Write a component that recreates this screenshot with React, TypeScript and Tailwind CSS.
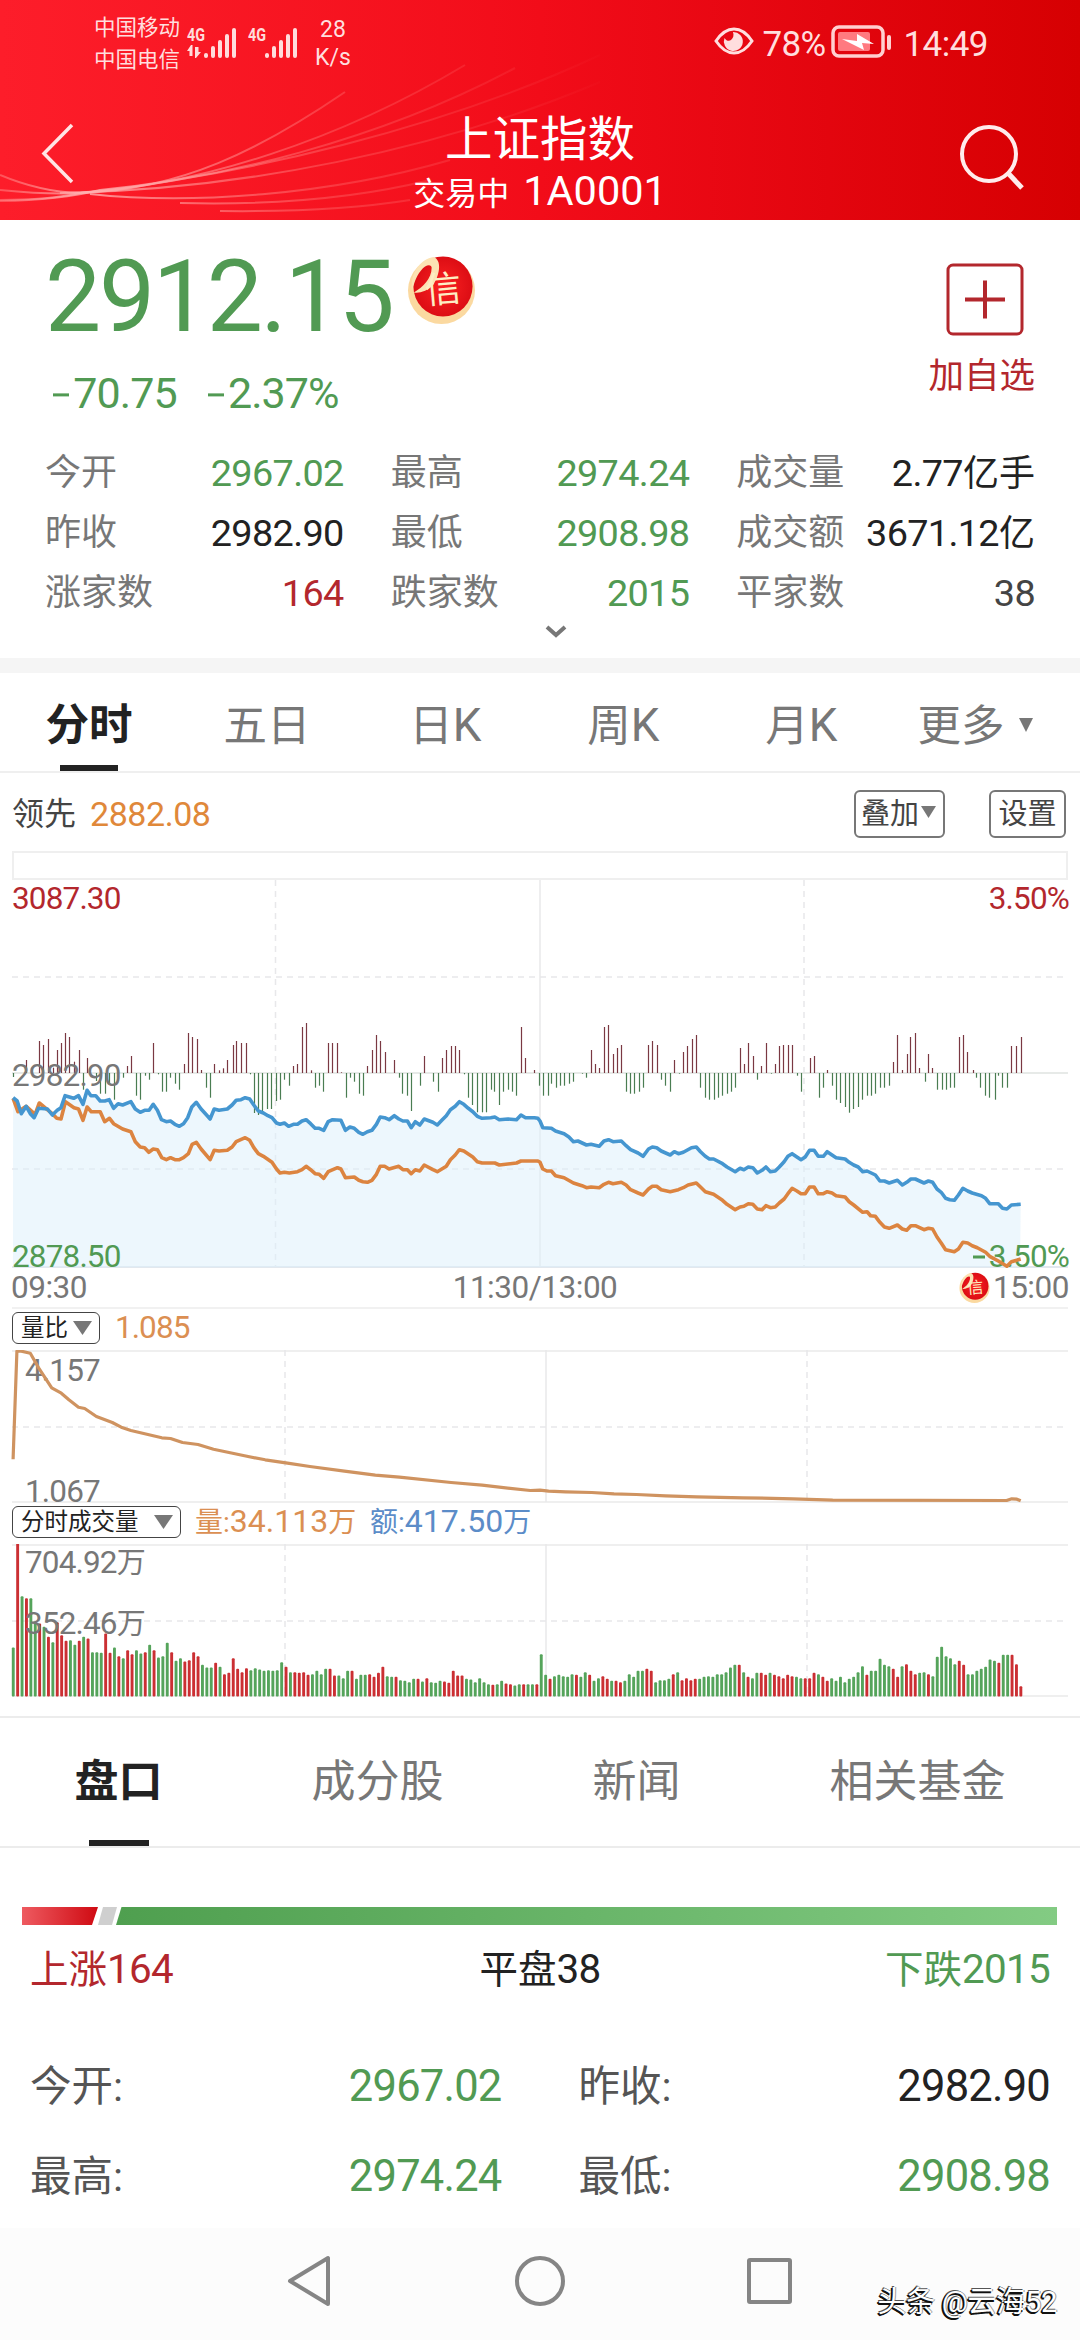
import { Fragment, type ReactNode } from "react";
import clsx from "clsx";

const FONT = "font-[Roboto,'Noto_Sans_CJK_SC',sans-serif]";

const KX = 1 / 2.904;
const KY = 1 / 3;

const PRICE_AM =
  "38,590 50,600 62,638 76,616 88,638 99,650 112,622 138,624 152,642 166,628 177,620 189,584 214,592 228,584 241,610 253,568 264,584 278,584 291,600 304,600 317,596 330,622 343,608 356,612 380,602 393,624 407,634 420,628 433,628 445,610 457,628 469,656 483,662 495,660 508,670 521,676 533,668 545,650 557,618 570,604 584,624 598,640 610,654 622,624 636,628 660,624 674,612 686,598 700,596 712,590 725,594 737,612 750,630 765,636 778,644 790,650 803,666 813,670 826,666 838,676 852,670 864,670 877,660 889,656 902,668 915,682 927,682 940,688 953,662 966,656 990,658 1003,688 1016,678 1029,682 1042,694 1054,700 1067,692 1080,688 1093,670 1104,648 1117,650 1130,656 1145,644 1158,654 1170,660 1183,660 1194,680 1206,662 1219,672 1232,654 1257,664 1270,672 1283,658 1296,644 1308,626 1322,616 1334,602 1347,610 1360,622 1373,632 1386,646 1400,652 1425,650 1437,648 1450,656 1475,654 1500,656 1513,642 1526,650 1552,650 1562,652";
const PRICE_PM =
  "0,660 8,680 33,682 45,690 70,698 84,708 97,722 110,720 135,732 148,730 172,736 186,720 199,716 212,722 236,720 250,734 263,746 285,756 299,766 315,744 326,738 339,740 352,750 378,762 390,752 402,758 416,754 440,740 454,738 466,752 480,766 492,774 504,774 530,788 543,798 567,812 581,802 592,806 605,798 618,800 631,816 645,808 656,798 669,812 683,810 695,798 709,782 720,766 732,758 746,768 758,776 770,768 783,748 796,748 808,766 823,766 834,752 848,762 860,770 886,774 898,784 911,792 924,798 937,812 950,810 974,822 987,840 1000,840 1014,846 1038,838 1052,852 1065,844 1077,834 1090,834 1115,846 1128,840 1140,844 1153,864 1165,874 1178,892 1190,896 1203,898 1215,882 1228,862 1242,870 1255,876 1282,884 1294,892 1306,908 1331,908 1343,922 1356,924 1369,912 1396,910";
const LEAD_AM =
  "38,592 52,632 76,616 102,640 114,606 128,618 140,628 152,638 165,652 177,654 190,602 215,620 228,624 241,658 253,618 265,632 291,632 304,662 318,652 330,668 356,684 380,692 393,722 407,738 420,740 432,754 445,744 457,746 470,770 483,776 495,770 508,776 521,776 533,770 547,758 558,730 570,724 584,744 610,776 622,748 636,750 660,748 674,738 686,722 712,710 725,718 737,740 750,758 765,766 790,784 803,804 813,816 826,814 840,816 864,812 877,806 889,796 902,806 915,818 927,820 940,832 953,812 980,800 990,804 1003,830 1029,828 1042,838 1054,842 1067,844 1080,838 1093,820 1104,796 1117,796 1130,804 1158,796 1170,806 1183,806 1194,818 1206,806 1219,810 1232,792 1257,806 1270,812 1296,796 1308,776 1322,762 1334,746 1347,750 1373,768 1386,782 1400,786 1437,786 1450,792 1500,786 1513,780 1562,780";
const LEAD_PM =
  "0,784 8,804 20,810 33,810 45,824 70,830 97,846 122,854 135,860 148,858 172,860 186,850 199,844 212,848 236,844 250,852 263,866 285,876 299,882 315,864 326,856 339,856 352,866 378,872 402,866 416,860 430,852 454,846 466,858 480,872 504,880 530,898 543,910 567,926 581,918 592,916 605,908 618,910 631,924 645,926 656,914 669,920 683,918 695,906 709,894 720,878 732,862 746,870 758,878 770,878 783,858 796,858 808,878 823,878 834,872 848,876 860,884 886,888 898,902 911,912 937,934 950,932 960,944 974,946 987,964 1000,978 1014,982 1038,972 1052,984 1065,988 1077,974 1090,974 1115,986 1128,982 1140,984 1153,1008 1165,1026 1178,1046 1203,1052 1215,1044 1228,1024 1242,1026 1255,1034 1270,1040 1294,1054 1306,1066 1331,1080 1356,1096 1369,1082 1396,1074";
const DIFF_AM =
  "38,528 76,477 89,500 114,420 126,432 140,414 153,500 165,447 178,426 190,396 201,408 215,482 228,447 241,566 254,471 278,540 291,578 304,578 317,550 330,596 356,530 368,495 381,465 394,584 408,596 420,524 432,536 445,426 458,520 469,572 483,572 495,530 509,548 521,566 533,489 547,396 559,408 571,414 585,507 597,560 611,590 622,489 635,508 648,502 660,477 676,432 686,420 699,426 713,426 725,520 737,636 750,642 762,634 776,624 788,624 801,600 814,596 826,536 838,554 852,495 863,489 878,378 890,366 902,508 916,560 927,554 939,572 953,426 965,426 979,426 991,514 1004,590 1017,530 1029,542 1043,578 1055,584 1067,495 1081,447 1093,402 1104,420 1119,453 1145,477 1158,530 1168,578 1183,584 1194,630 1221,554 1232,465 1258,542 1271,572 1285,471 1296,447 1311,435 1322,435 1334,447 1348,520 1360,590 1372,612 1386,634 1400,634 1412,634 1425,566 1436,572 1450,612 1461,572 1474,566 1488,572 1499,584 1514,378 1525,471 1552,507 1564,554";
const DIFF_PM =
  "8,584 22,584 33,548 47,560 59,554 71,554 85,548 97,542 123,518 135,530 149,447 161,489 172,501 187,378 198,372 213,459 224,441 236,432 251,572 262,578 274,578 288,572 300,560 315,432 326,420 339,432 352,536 364,554 378,572 390,477 403,518 416,453 428,435 440,414 454,402 466,560 480,590 491,596 504,596 518,590 529,584 542,578 556,572 567,560 582,441 593,489 605,426 619,465 631,536 643,495 657,426 670,518 683,489 695,435 707,432 721,432 733,432 747,524 759,572 785,471 797,465 809,590 823,560 834,507 849,554 860,596 872,606 887,618 898,635 910,624 924,618 936,596 950,584 962,584 974,578 988,560 1000,560 1014,554 1026,483 1038,402 1052,507 1065,459 1075,408 1090,396 1102,501 1117,542 1128,459 1139,501 1154,566 1166,566 1178,566 1192,560 1203,560 1218,408 1229,402 1241,453 1256,507 1267,530 1279,560 1293,584 1305,590 1320,596 1331,524 1343,560 1357,560 1369,435 1383,435 1396,408";
const RATIO_AM =
  "38,506 49,182 62,182 88,188 112,232 150,292 178,308 200,328 228,350 246,354 280,378 326,396 352,410 380,420 470,442 495,444 530,456 575,462 620,476 710,496 770,508 835,518 900,528 1000,542 1090,554 1160,560 1310,576 1400,584 1540,600";
const RATIO_PM =
  "0,599 25,602 75,604 150,606 215,610 280,612 365,616 455,619 590,622 735,625 850,629 1355,630 1370,625 1385,626 1396,631";
// one bar a minute: direction and height
const VOLUME =
  "g147 r462 g301 r295 g295 g219 r219 g209 r179 g163 r223 r184 r167 g169 g155 r167 g179 r174 g133 g133 g131 r189 r131 g147 r121 g115 r139 r127 g139 g129 r133 g155 r139 g117 g121 g161 r133 g107 g115 r105 r109 r133 r121 g95 g87 g87 r101 g89 r67 r71 r115 r83 r73 r85 g79 g85 g81 g77 g79 g77 g79 g103 r89 g73 r73 r71 r73 r65 g67 g77 g67 g83 r83 r63 g63 g55 g77 r77 g53 g65 g65 r67 r59 r71 r89 g61 g59 r59 g49 g47 g43 g53 r53 g45 r55 g43 g41 g47 r45 r41 r77 r63 r63 g53 g51 g43 g55 g43 g37 r35 g37 g47 r39 r37 g33 g37 r37 g37 g37 r37 " +
  "g127 g65 r53 g61 g65 g61 g59 g67 r65 g59 g73 r65 g47 g55 r61 r53 g47 r47 r43 g47 g67 g59 g77 g77 r83 r77 g43 g49 g49 g53 r67 g73 r49 r55 r49 r53 g53 g59 g61 g59 g67 g67 g73 g87 g95 r95 g73 r59 g55 g71 r71 r65 g71 r65 r61 r55 r65 r61 g59 g55 r55 r55 r71 g67 r59 r47 g55 g47 g59 g43 g53 g59 g73 g91 r65 g77 g77 g113 g95 g91 r83 r59 g91 r97 r77 r67 g71 g73 r67 g61 g119 g149 g121 g115 g97 r107 r95 g67 g67 g77 g83 g89 g111 g107 r101 g125 g125 r125 r97 r31";

const parse = (s: string, ox: number, oy: number) =>
  s.split(" ").map((p) => {
    const [x, y] = p.split(",").map(Number);
    return [x * KX + ox, y * KY + oy];
  });

const series = (am: string, pm: string, oy: number) => [...parse(am, 0, oy), ...parse(pm, 540, oy)];
const toPoints = (pts: number[][]) => pts.map(([x, y]) => `${x.toFixed(1)},${y.toFixed(1)}`).join(" ");

// latin digits sit a touch larger than the chinese glyphs around them
function Txt({ children }: { children: string }) {
  return (
    <>
      {children.split(/([\dA-Z.:%/]+)/).map((part, i) => (
        <Fragment key={i}>
          {i % 2 ? <span className="text-[1.05em] tracking-[-0.017em]">{part}</span> : part}
        </Fragment>
      ))}
    </>
  );
}

function Minus() {
  return <span className="mr-[4px] inline-block h-[0.08em] w-[0.38em] -translate-y-[0.27em] bg-current" />;
}

function Seal({ size }: { size: number }) {
  return (
    <svg width={size} height={size} viewBox="0 0 70 70">
      <defs>
        <radialGradient id="sealRed">
          <stop offset="0" stopColor="#fb2222" />
          <stop offset="1" stopColor="#dc0d14" />
        </radialGradient>
      </defs>
      <circle cx="35" cy="36" r="34" fill="#fbd9a0" />
      <ellipse cx="36.5" cy="32" rx="30" ry="30.5" fill="url(#sealRed)" />
      <path d="M5 36C3 18 14 4 27 2C35 5 34 18 27 30C21 37 12 39 7 38C16 33 25 24 25 13C25 9 19 9 14 16C9 22 7 30 5 36Z" fill="#fce3b4" />
      <text x="18" y="48" fontSize="37" fill="#fdeec4" transform="rotate(-5 35 35)" className="font-['Noto_Sans_CJK_SC',sans-serif]">
        信
      </text>
    </svg>
  );
}

function Signal({ data }: { data?: boolean }) {
  return (
    <svg width="50" height="34" viewBox="0 0 50 34" fill="#ffdcdc" className="overflow-visible">
      <text x="0" y="15" fontSize="19" fontWeight="700" textLength="18" lengthAdjust="spacingAndGlyphs">4G</text>
      {data && <path d="M4 19l-4 6h2.500v5h3V19zM9 32l5-6h-2.500v-5H8v11z" />}
      {[5, 12, 18, 24, 30].map((h, i) => (
        <rect key={h} x={17 + i * 7} y={32 - h} width="4" height={h} rx="2" />
      ))}
    </svg>
  );
}

function StatusBar() {
  return (
    <div className="flex h-[86px] justify-between pt-[8px] pr-[92px] pl-[94px] text-[#ffdede]">
      <div className="flex">
        <div className="pt-[4px] text-[21.500px] leading-[32px]">
          <p>中国移动</p>
          <p>中国电信</p>
        </div>
        <div className="ml-[7px] flex gap-[11px] pt-[18px]">
          <Signal data />
          <Signal />
        </div>
        <div className="ml-[9px] w-[52px] pt-[8px] text-center text-[23px] leading-[28px]">
          <p>28</p>
          <p>K/s</p>
        </div>
      </div>
      <div className="flex h-[58px] items-center pt-[14px] text-[35px] leading-none">
        <svg width="40" height="28" viewBox="0 0 40 28" className="-translate-y-[3px]">
          <path d="M2 14C8 5 14 2 20 2s12 3 18 12c-6 9-12 12-18 12S8 23 2 14z" fill="none" stroke="#ffdede" strokeWidth="3" />
          <path d="M19 5a9.500 9.500 0 1 1-8.500 6c2 3 4.500 3.500 6.500 2c2.500-2 3-5 2-8z" fill="#ffdede" />
        </svg>
        <span className="ml-[8px] w-[64px] tracking-[-0.02em]">78%</span>
        <svg width="64" height="34" viewBox="0 0 64 34" className="ml-[5px] -translate-y-[2px]">
          <rect x="2" y="2" width="50" height="29" rx="6" fill="none" stroke="#ffd0d0" strokeWidth="3.500" />
          <rect x="7" y="7" width="32" height="19" rx="2" fill="#ff7a80" />
          <path d="M11 14l15 2V9l17 10-12-1 2 7z" fill="#fff" />
          <rect x="56" y="10" width="4" height="15" rx="2" fill="#ffd0d0" />
        </svg>
        <span className="ml-[8px] tracking-[-0.015em]">14:49</span>
      </div>
    </div>
  );
}

function Header() {
  return (
    <header className="relative h-[220px] bg-linear-to-r from-[#fd1d2a] via-[#f20c19] via-50% to-[#d60002]">
      <svg className="absolute inset-0" width="1080" height="220" fill="none" strokeWidth="2">
        <defs>
          <linearGradient id="fade" gradientUnits="userSpaceOnUse" x1="0" y1="0" x2="620" y2="0">
            <stop offset="0" stopColor="#ff8a8a" stopOpacity=".5" />
            <stop offset=".14" stopColor="#ffb0b0" stopOpacity=".8" />
            <stop offset=".55" stopColor="#ff7a7a" stopOpacity=".35" />
            <stop offset="1" stopColor="#ff7a7a" stopOpacity="0" />
          </linearGradient>
        </defs>
        <g stroke="url(#fade)">
          <path d="M0 175Q40 192 80 193C180 190 260 150 345 92" />
          <path d="M0 190Q50 195 80 193C200 185 340 140 465 65" />
          <path d="M0 200Q50 200 80 193C220 180 380 140 515 68" />
          <path d="M0 201Q60 200 100 190C240 175 440 130 600 55" />
          <path d="M60 193C240 190 440 150 600 82" />
          <path d="M90 194C190 205 330 195 450 160" />
          <path d="M180 203C260 205 350 200 430 180" />
          <path d="M220 211C300 212 360 208 410 200" />
        </g>
      </svg>
      <div className="relative">
        <StatusBar />
        <div className="flex items-start justify-between pr-[54px] pl-[40px] text-white">
          <svg width="36" height="64" viewBox="0 0 36 64" className="mt-[36px]" fill="none" stroke="#ffe4e4" strokeWidth="3.500">
            <path d="M32 3L4 31.500L32 60" />
          </svg>
          <div className="ml-[46px] pt-[28px] text-center">
            <h1 className="text-[47.500px] leading-[52px]">上证指数</h1>
            <p className="text-[32px] leading-[50px]">
              交易中<span className="ml-[14px] text-[41.500px]">1A0001</span>
            </p>
          </div>
          <svg width="68" height="66" viewBox="0 0 68 66" className="mt-[38px]" fill="none" stroke="#ffecec" strokeWidth="4">
            <circle cx="31" cy="30" r="27" />
            <path d="M50 49L64 64" strokeWidth="5" />
          </svg>
        </div>
      </div>
    </header>
  );
}

const STATS: [string, string, string][] = [
  ["今开", "2967.02", "text-[#519a53]"],
  ["最高", "2974.24", "text-[#519a53]"],
  ["成交量", "2.77亿手", "text-[#222]"],
  ["昨收", "2982.90", "text-[#222]"],
  ["最低", "2908.98", "text-[#519a53]"],
  ["成交额", "3671.12亿", "text-[#222]"],
  ["涨家数", "164", "text-[#b3272d]"],
  ["跌家数", "2015", "text-[#519a53]"],
  ["平家数", "38", "text-[#444]"],
];

function Quote() {
  return (
    <section className="h-[438px] pr-[45px] pl-[45px]">
      <div className="flex h-[223px] justify-between">
        <div>
          <div className="flex h-[129px] text-[#519a53]">
            <span className="w-[362px] pt-[25px] text-[100px] leading-[104px] tracking-[-0.023em]">2912.15</span>
            <div className="pt-[35px]">
              <Seal size={69} />
            </div>
          </div>
          <p className="mt-[19px] ml-[8px] text-[43px] leading-[50px] tracking-[-0.022em] text-[#519a53]">
            <Minus />70.75<span className="ml-[31px]"><Minus />2.37%</span>
          </p>
        </div>
        <div className="flex flex-col items-center pt-[43px] text-[#b3272d]">
          <svg width="78" height="74" viewBox="0 0 78 74" fill="none" stroke="currentColor" strokeWidth="3" className="translate-x-[3px]">
            <rect x="2" y="2" width="74" height="69" rx="5" />
            <path d="M19 36.500h40M39 17.500v38" strokeWidth="4" />
          </svg>
          <p className="mt-[12px] text-[35.500px] leading-[54px]">加自选</p>
        </div>
      </div>
      <div className="grid grid-cols-3 gap-x-[47px] text-[36px]">
        {STATS.map(([label, value, tone]) => (
          <div key={label} className="flex h-[60px] items-center justify-between leading-[60px] whitespace-nowrap">
            <span className="text-[#777]">{label}</span>
            <span className={tone}>
              <Txt>{value}</Txt>
            </span>
          </div>
        ))}
      </div>
      <svg width="22" height="14" viewBox="0 0 22 14" className="mt-[2px] ml-[500px]" fill="none" stroke="#777" strokeWidth="4">
        <path d="M2 2l9 8l9-8" />
      </svg>
    </section>
  );
}

function Caret({ className }: { className: string }) {
  return (
    <svg viewBox="0 0 20 14" preserveAspectRatio="none" className={className}>
      <path d="M0 0h20L10 14z" fill="#777" />
    </svg>
  );
}

function PeriodTabs() {
  return (
    <nav className="flex h-[100px] border-b-2 border-[#efefef] text-[43.500px] text-[#777]">
      {["分时", "五日", "日K", "周K", "月K", "更多"].map((tab, i) => (
        <div key={tab} className="flex w-[178px] flex-col items-center">
          <div className={clsx("flex h-[93px] items-center pt-[14px] leading-[60px]", i === 0 && "font-bold text-[#222]")}>
            <span>
              <Txt>{tab}</Txt>
            </span>
            {i === 5 && <Caret className="mr-[8px] mb-[4px] ml-[14px] h-[14px] w-[14px]" />}
          </div>
          {i === 0 && <div className="h-[6px] w-[58px] bg-[#222]" />}
        </div>
      ))}
    </nav>
  );
}

function Grid({ h, xs, ys }: { h: number; xs: number[]; ys: number[] }) {
  return (
    <g stroke="#e8e8ea" strokeWidth="1.500" fill="none">
      {xs.map((x, i) => (
        <path key={x} d={`M${x} 0V${h}`} strokeDasharray={i === 1 ? undefined : "6 5"} />
      ))}
      {ys.map((y) => (
        <path key={y} d={`M12 ${y}H1068`} strokeDasharray="6 5" />
      ))}
    </g>
  );
}

function Label({ className, children }: { className: string; children: ReactNode }) {
  return <span className={clsx("absolute text-[31.500px] leading-[32px] tracking-[-0.027em] whitespace-nowrap", className)}>{children}</span>;
}

function PriceChart() {
  const price = series(PRICE_AM, PRICE_PM, 21);
  const lead = series(LEAD_AM, LEAD_PM, 21);
  const diff = series(DIFF_AM, DIFF_PM, 21);
  const base = 193;
  return (
    <div className="relative h-[388px]">
      <Label className="top-[3px] left-[12px] text-[#b3272d]">3087.30</Label>
      <Label className="top-[3px] right-[11px] text-[#b3272d]">3.50%</Label>
      <svg width="1080" height="388" className="block">
        <Grid h={387} xs={[275.5, 540, 804]} ys={[97, 289]} />
        <path d={`M12 ${base}H1068`} stroke="#dfe3e0" strokeWidth="1.500" />
        <path d="M12 387H1068" stroke="#e2e8ee" strokeWidth="2" />
        <polygon points={`13,387 ${toPoints(price)} 1020,387`} fill="#dceffc" fillOpacity=".5" />
        {diff.map(([x, y]) => (
          <path key={x} d={`M${Math.round(x) + 0.5} ${base}V${y.toFixed(1)}`} stroke={y < base ? "#7a3842" : "#4a7d52"} strokeWidth="1.200" />
        ))}
      </svg>
      <Label className="top-[180px] left-[12px] text-[#777]">2982.90</Label>
      <Label className="bottom-[-5px] left-[12px] text-[#519a53]">2878.50</Label>
      <Label className="right-[11px] bottom-[-5px] text-[#519a53]">
        <Minus />3.50%
      </Label>
      <svg width="1080" height="388" className="absolute inset-0" fill="none" strokeWidth="3.600" strokeLinejoin="round">
        <polyline points={toPoints(lead)} stroke="#dc8440" />
        <polyline points={toPoints(price)} stroke="#4596d0" />
      </svg>
    </div>
  );
}

function IndicatorHead({ name, wide, children }: { name: string; wide?: boolean; children: ReactNode }) {
  return (
    <div className="flex h-[41px] items-center pb-[3px] pl-[12px] text-[28px] leading-[38px]">
      <div className={clsx("flex h-[32px] items-center justify-between rounded-[6px] border-[1.500px] border-[#444] pr-[7px] pl-[8px] text-[23.500px] leading-[28px] text-[#222]", wide ? "w-[169px]" : "w-[88px]")}>
        {name}
        <Caret className="h-[14px] w-[19px]" />
      </div>
      {children}
    </div>
  );
}

function RatioChart() {
  return (
    <div className="relative h-[153px]">
      <svg width="1080" height="153" className="block" fill="none">
        <path d="M12 1H1068M12 152H1068" stroke="#efefef" strokeWidth="2" />
        <Grid h={152} xs={[285, 546, 807]} ys={[77]} />
      </svg>
      <Label className="top-[5px] left-[25px] text-[#777]">4.157</Label>
      <Label className="top-[126px] left-[25px] text-[#777]">1.067</Label>
      <svg width="1080" height="153" className="absolute inset-0" fill="none">
        <polyline points={toPoints(series(RATIO_AM, RATIO_PM, -59.5))} stroke="#cf9360" strokeWidth="3.200" strokeLinejoin="round" />
      </svg>
    </div>
  );
}

function VolumeChart() {
  return (
    <div className="relative h-[154px]">
      <svg width="1080" height="154" className="block">
        <path d="M12 1H1068M12 152H1068" stroke="#efefef" strokeWidth="2" />
        <Grid h={152} xs={[285, 546, 807]} ys={[77]} />
        {VOLUME.split(" ").map((bar, i) => {
          const h = Number(bar.slice(1)) / 3;
          return <rect key={i} x={11.8 + i * 4.4} y={152.5 - h} width="2.900" height={h} rx="1" fill={bar[0] === "r" ? "#cb2f33" : "#55a45b"} />;
        })}
      </svg>
      <Label className="top-[3px] left-[25px] text-[#777]">704.92<span className="text-[29px]">万</span></Label>
      <Label className="top-[64px] left-[25px] text-[#777]">352.46<span className="text-[29px]">万</span></Label>
    </div>
  );
}

function Charts() {
  return (
    <section className="h-[943px]">
      <div className="flex h-[78px] items-center pt-[3px] pr-[14px] pl-[12px] text-[32px] leading-[40px] text-[#444]">
        领先
        <span className="ml-[14px] text-[34px] tracking-[-0.013em] text-[#e0883a]">2882.08</span>
        <div className="ml-auto flex gap-[44px] text-[29px]">
          <div className="flex h-[48px] w-[91px] items-center rounded-[6px] border-2 border-[#777] pl-[5px]">
            叠加
            <Caret className="mb-[4px] ml-[2px] h-[12px] w-[15px]" />
          </div>
          <div className="flex h-[48px] w-[77px] items-center justify-center rounded-[6px] border-2 border-[#777]">设置</div>
        </div>
      </div>
      <div className="mx-[12px] h-[29px] border-2 border-[#efefef]" />
      <PriceChart />
      <div className="relative mx-[12px] flex h-[41px] items-center justify-between border-b-2 border-[#f1f1f1] text-[31.500px] leading-[40px] tracking-[-0.015em] text-[#777]">
        <span className="-ml-[1px]">09:30</span>
        <span className="absolute inset-x-0 pr-[10px] text-center">11:30/13:00</span>
        <span className="flex items-center gap-[3px]">
          <Seal size={31} />
          <span className="-mr-[1px]">15:00</span>
        </span>
      </div>
      <IndicatorHead name="量比">
        <span className="ml-[15px] text-[31.500px] tracking-[-0.03em] text-[#db8f52]">1.085</span>
      </IndicatorHead>
      <RatioChart />
      <IndicatorHead name="分时成交量" wide>
        <span className="ml-[14px] w-[175px] text-[#db8f52]">
          量:<span className="text-[32px]">34.113</span>万
        </span>
        <span className="text-[#5b8cc8]">
          额:<span className="text-[32px]">417.50</span>万
        </span>
      </IndicatorHead>
      <VolumeChart />
    </section>
  );
}

function DetailTabs() {
  return (
    <nav className="flex h-[132px] justify-around border-y-2 border-[#ececec] text-[44px] leading-[60px] text-[#777]">
      {["盘口", "成分股", "新闻", "相关基金"].map((tab, i) => (
        <div key={tab} className="flex flex-col items-center">
          <span className={clsx("flex h-[122px] items-center pt-[6px]", i === 0 && "font-bold text-[#222]")}>{tab}</span>
          {i === 0 && <div className="h-[6px] w-[60px] bg-[#222]" />}
        </div>
      ))}
    </nav>
  );
}

const DETAILS: [string, string, string][] = [
  ["今开:", "2967.02", "text-[#519a53]"],
  ["昨收:", "2982.90", "text-[#222]"],
  ["最高:", "2974.24", "text-[#519a53]"],
  ["最低:", "2908.98", "text-[#519a53]"],
];

function Breadth() {
  return (
    <section className="h-[380px] pt-[59px]">
      <svg width="1080" height="18" className="block">
        <defs>
          <linearGradient id="up">
            <stop offset="0" stopColor="#ee5a60" />
            <stop offset="1" stopColor="#cf0a12" />
          </linearGradient>
          <linearGradient id="down">
            <stop offset="0" stopColor="#4f9f4f" />
            <stop offset="1" stopColor="#83cb83" />
          </linearGradient>
        </defs>
        <path d="M22 0H98L92 18H22z" fill="url(#up)" />
        <path d="M103 0H117L112 18H98z" fill="#cfcfcf" />
        <path d="M121.500 0H1057V18H116z" fill="url(#down)" />
      </svg>
      <div className="relative mt-[15px] flex h-[60px] items-center justify-between px-[30px] text-[38.500px] leading-[60px]">
        <span className="text-[#b3272d]"><Txt>上涨164</Txt></span>
        <span className="absolute inset-x-0 text-center text-[#222]"><Txt>平盘38</Txt></span>
        <span className="text-[#519a53]"><Txt>下跌2015</Txt></span>
      </div>
      <div className="mt-[42px] grid grid-cols-2 gap-x-[77px] pr-[30px] pl-[30px] text-[41.500px]">
        {DETAILS.map(([label, value, tone]) => (
          <div key={label} className="flex h-[90px] items-center justify-between leading-[60px]">
            <span className="text-[#555]">{label}</span>
            <span className={clsx("text-[43.500px] tracking-[-0.018em]", tone)}>{value}</span>
          </div>
        ))}
      </div>
    </section>
  );
}

function NavBar() {
  return (
    <footer className="relative h-[112px] bg-[#fcfcfc]">
      <svg width="1080" height="112" fill="none" stroke="#858585" strokeWidth="4" strokeLinejoin="round">
        <path d="M328 30V76L290 53z" />
        <circle cx="540" cy="53" r="23" />
        <rect x="749" y="32" width="41" height="42" rx="1" />
      </svg>
      <span className="absolute right-[23px] bottom-[20px] text-[29px] leading-[36px] tracking-[-0.01em] whitespace-nowrap text-white [text-shadow:-2px_1px_0_#111,-1px_2px_0_#111,-1px_-1px_0_#555,1px_0_0_#999]">
        头条 @云海52
      </span>
    </footer>
  );
}

export default function App() {
  return (
    <main className={clsx("h-[2340px] w-[1080px] overflow-hidden bg-white", FONT)}>
      <Header />
      <Quote />
      <div className="h-[15px] bg-[#f5f5f5]" />
      <PeriodTabs />
      <Charts />
      <DetailTabs />
      <Breadth />
      <NavBar />
    </main>
  );
}
